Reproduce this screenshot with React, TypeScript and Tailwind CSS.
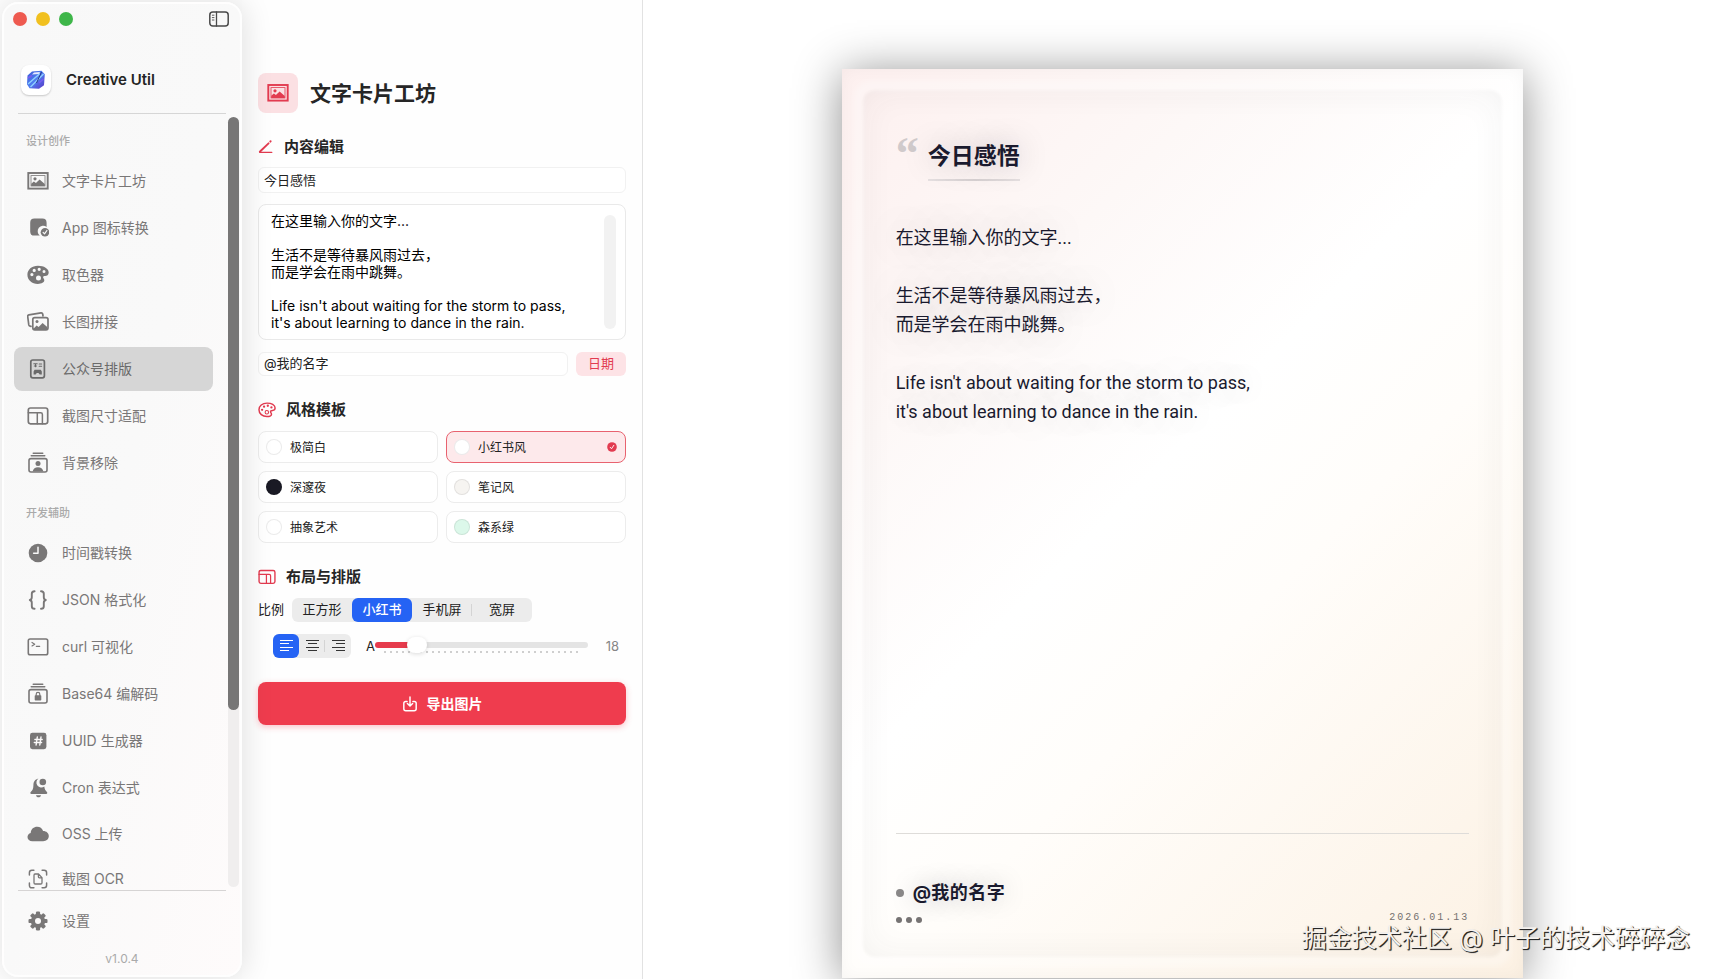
import React, { useState } from "react";

type IconProps = { className?: string };

function Svg({ className = "", children }: { className?: string; children: React.ReactNode }) {
  return (
    <svg
      viewBox="0 0 22 22"
      fill="none"
      stroke="currentColor"
      strokeWidth="1.5"
      strokeLinecap="round"
      strokeLinejoin="round"
      aria-hidden="true"
      className={`shrink-0 ${className}`}
    >
      {children}
    </svg>
  );
}

function PhotoFrameIcon({ className }: IconProps) {
  return (
    <Svg className={className}>
      <rect x="1.3" y="3" width="19.4" height="15.6" strokeWidth="1.9" strokeLinejoin="miter" />
      <rect x="4" y="5.6" width="14" height="10.4" strokeWidth="0.8" strokeLinejoin="miter" />
      <circle cx="8" cy="8.8" r="1.6" fill="currentColor" stroke="none" />
      <path d="M4.2 16v-2.2l2.7-2.2 2 1.5 3.7-3.6 5.2 4.4V16z" fill="currentColor" stroke="none" />
    </Svg>
  );
}

function AppCheckIcon({ className }: IconProps) {
  return (
    <Svg className={className}>
      <path
        d="M7.4 1.6h8c2.8 0 4.2 1.4 4.2 4.2v4.1a5.4 5.4 0 0 0-6.8 8.7H7.4c-2.8 0-4.2-1.400-4.200-4.200V5.800c0-2.800 1.400-4.200 4.200-4.200z"
        fill="currentColor"
        stroke="none"
      />
      <circle cx="18" cy="15.200" r="4.300" fill="currentColor" stroke="none" />
      <path d="m16.100 15.400 1.400 1.500 2.400-3.400" className="stroke-[#f9f9f9]" strokeWidth="1.200" />
    </Svg>
  );
}

function PaletteFillIcon({ className }: IconProps) {
  return (
    <Svg className={className}>
      <path
        fillRule="evenodd"
        fill="currentColor"
        stroke="none"
        d="M11 1.800C4.800 1.800.400 5.700.400 10.700c0 5.300 4.600 9.200 10.400 9.200 4 0 6.500-1.500 6.500-3.600 0-1.600-1.200-2-1.200-3 0-.900.800-1.300 2-1.300 2 0 3.600-1.100 3.600-3.500C21.700 4.700 17 1.800 11 1.800zM4.900 9a1.600 1.600 0 1 1 0 3.200A1.600 1.600 0 0 1 4.900 9zm2.300-4.200a1.600 1.600 0 1 1 0 3.200 1.600 1.600 0 0 1 0-3.200zm5-1.100a1.600 1.600 0 1 1 0 3.200 1.600 1.600 0 0 1 0-3.200zm4.800 2.200a1.500 1.500 0 1 1 0 3 1.500 1.500 0 0 1 0-3zm-5.500 5.600a2.500 2.500 0 1 1 0 5 2.500 2.500 0 0 1 0-5z"
      />
    </Svg>
  );
}

function PaletteIcon({ className }: IconProps) {
  return (
    <Svg className={className}>
      <path
        strokeWidth="1.800"
        d="M11 2.600C5.200 2.600 1.200 6.100 1.200 10.600c0 4.900 4.300 8.400 9.600 8.400 3.600 0 5.700-1.200 5.700-2.900 0-1.400-1.200-1.700-1.200-2.900s1.100-1.700 2.500-1.700c1.800 0 3.100-.900 3.100-2.800 0-3.800-4.400-6.100-9.900-6.100z"
      />
      <g fill="currentColor" stroke="none">
        <circle cx="5" cy="10.800" r="1.400" />
        <circle cx="7.400" cy="7" r="1.400" />
        <circle cx="12" cy="5.800" r="1.400" />
        <circle cx="16.400" cy="7.900" r="1.400" />
      </g>
      <circle cx="10.800" cy="13.800" r="2.100" strokeWidth="1.300" />
    </Svg>
  );
}

function PhotoStackIcon({ className }: IconProps) {
  return (
    <Svg className={className}>
      <path
        d="M4 15.300 3 15.100c-.700-.100-1.100-.600-1.200-1.200L.700 5.600c-.100-.900.400-1.500 1.200-1.700L14 1.800c.900-.100 1.500.300 1.700 1.200l.300 2"
        strokeWidth="1.700"
      />
      <rect x="5.800" y="6.600" width="15.200" height="12.200" rx="2" strokeWidth="1.700" />
      <circle cx="10" cy="10.500" r="1.500" fill="currentColor" stroke="none" />
      <path d="m6.600 17.500 3-3 2 1.500 4-4 4.600 4v2.200H6.600z" fill="currentColor" stroke="none" />
    </Svg>
  );
}

function RichDocIcon({ className }: IconProps) {
  return (
    <Svg className={className}>
      <rect x="3.800" y="2" width="13.600" height="17.800" rx="2" strokeWidth="1.700" />
      <path d="M6.800 5.700h3.400M8.500 5.700v3M7.300 8h2.200M12.200 6h2.400M12.200 8.300h2.400" strokeWidth="1.100" />
      <path d="M6.600 16.600v-3.200l1-1.700h6.200l1 1.700v3.200h-2.100l-1.200-1.700H9.800l-1.200 1.700z" fill="currentColor" stroke="none" />
    </Svg>
  );
}

function LayoutIcon({ className }: IconProps) {
  return (
    <Svg className={className}>
      <rect x="1.300" y="3" width="19.400" height="15.800" rx="2.200" strokeWidth="1.700" />
      <path d="M1.300 7.800h12.400c1 0 1.700.600 1.700 1.600v9.400M10.300 8v10.800" strokeWidth="1.500" />
    </Svg>
  );
}

function StackPersonIcon({ className }: IconProps) {
  return (
    <Svg className={className}>
      <path d="M6.200 1.200h9.600M4.200 3.800h13.600" strokeWidth="1.400" />
      <rect x="2" y="6.600" width="18" height="13.400" rx="2" strokeWidth="1.600" />
      <circle cx="11" cy="11.400" r="2.500" fill="currentColor" stroke="none" />
      <path d="M5.600 19.600c.600-3 2.600-4.400 5.400-4.400s4.800 1.400 5.400 4.400z" fill="currentColor" stroke="none" />
    </Svg>
  );
}

function ClockIcon({ className }: IconProps) {
  return (
    <Svg className={className}>
      <circle cx="11" cy="11" r="9.300" fill="currentColor" stroke="none" />
      <path d="M11 5.300v6H6.600" className="stroke-[#f9f9f9]" strokeWidth="1.500" />
    </Svg>
  );
}

function BracesIcon({ className }: IconProps) {
  return (
    <Svg className={className}>
      <path
        strokeWidth="1.900"
        d="M7.600 2.200C5.500 2.200 4.800 3 4.800 4.800v3.400c0 1.500-.600 2.400-2 2.800 1.400.400 2 1.300 2 2.800v3.400c0 1.800.700 2.600 2.800 2.600M14 2.200c2.100 0 2.800.800 2.800 2.600v3.400c0 1.500.600 2.400 2 2.800-1.400.400-2 1.300-2 2.800v3.400c0 1.800-.700 2.600-2.800 2.600"
      />
    </Svg>
  );
}

function TerminalIcon({ className }: IconProps) {
  return (
    <Svg className={className}>
      <rect x="1.300" y="3" width="19.400" height="15.800" rx="1.800" strokeWidth="1.600" />
      <path d="m5 6.500 2.700 1.700L5 9.900M9.300 10.300h3.400" strokeWidth="1.200" />
    </Svg>
  );
}

function StackLockIcon({ className }: IconProps) {
  return (
    <Svg className={className}>
      <path d="M6.200 1.200h9.600M4.200 3.800h13.600" strokeWidth="1.400" />
      <rect x="2" y="6.600" width="18" height="13.400" rx="2" strokeWidth="1.600" />
      <rect x="7.700" y="12.200" width="6.600" height="5.200" rx="0.700" fill="currentColor" stroke="none" />
      <path d="M9.200 12.600v-1.300c0-2.500 3.600-2.500 3.600 0v1.300" strokeWidth="1.200" />
    </Svg>
  );
}

function HashIcon({ className }: IconProps) {
  return (
    <Svg className={className}>
      <rect x="3" y="2.800" width="16.400" height="16.400" rx="2.400" fill="currentColor" stroke="none" />
      <path d="m10.300 7-1.200 8M14 7l-1.200 8M7.900 9.500h7.300M7.300 12.500h7.300" className="stroke-[#fbf9f9]" strokeWidth="1.400" />
    </Svg>
  );
}

function BellIcon({ className }: IconProps) {
  return (
    <Svg className={className}>
      <path
        d="M11.400 1.600c-3.600.800-4.900 3.300-5 6.800-.100 3.600-.900 4.700-2.700 6.500-.800.800-.400 2 .700 2h14.800c1.100 0 1.500-1.200.700-2-1.500-1.500-2.300-2.600-2.600-5.400a4.600 4.600 0 0 1-5.900-7.900z"
        fill="currentColor"
        stroke="none"
      />
      <circle cx="15.800" cy="5" r="3.300" fill="currentColor" stroke="none" />
      <path d="M9 18.200h5c-.3 1.400-1.200 2.100-2.500 2.100S9.300 19.600 9 18.200z" fill="currentColor" stroke="none" />
    </Svg>
  );
}

function CloudIcon({ className }: IconProps) {
  return (
    <Svg className={className}>
      <path
        d="M5.400 18.200C2.500 18.200.5 16.400.5 14c0-2 1.300-3.600 3.200-4.100C4 6 6.800 3.800 10.200 3.800c2.800 0 5 1.600 5.900 4.100 3.300 0 5.700 2.200 5.700 5.100s-2.300 5.200-5.600 5.200z"
        fill="currentColor"
        stroke="none"
      />
    </Svg>
  );
}

function DocScanIcon({ className }: IconProps) {
  return (
    <Svg className={className}>
      <path d="M2.400 7V4.700c0-1.700.9-2.500 2.500-2.500h2M15.100 2.200h2c1.700 0 2.500.8 2.500 2.500V7M19.600 15v2.300c0 1.700-.9 2.500-2.500 2.500h-2M6.900 19.800h-2c-1.700 0-2.500-.9-2.500-2.500V15" />
      <path
        d="M8 6h3.500l3.500 3.600v5.200c0 .8-.4 1.200-1.200 1.200H8.200c-.8 0-1.200-.4-1.200-1.200V7.200C7 6.400 7.200 6 8 6zM11.400 6.200v2.600c0 .7.300 1 1 1h2.400"
        strokeWidth="1.300"
      />
    </Svg>
  );
}

function GearIcon({ className }: IconProps) {
  return (
    <Svg className={className}>
      <g fill="currentColor" stroke="none">
        {[0, 45, 90, 135].map((a) => (
          <rect key={a} x="8.900" y="1.500" width="4.200" height="19" rx="1.200" transform={`rotate(${a} 11 11)`} />
        ))}
        <circle cx="11" cy="11" r="7.200" />
      </g>
      <circle cx="11" cy="11" r="3" className="fill-[#fcfbfb]" stroke="none" />
    </Svg>
  );
}

function SidebarIcon({ className }: IconProps) {
  return (
    <Svg className={className}>
      <rect x="1.800" y="4" width="18.400" height="14" rx="3" />
      <path d="M8.500 4v14" strokeWidth="1.300" />
      <path d="M4.300 7.200h1.700M4.300 9.600h1.700M4.300 12h1.700" strokeWidth="0.900" />
    </Svg>
  );
}

function PencilLineIcon({ className }: IconProps) {
  return (
    <Svg className={className}>
      <path d="M2.500 17.500 14.500 6" strokeWidth="2.600" />
      <path d="m17 3.500.3-.3" strokeWidth="2.800" />
      <path d="M2.500 18.300H19" strokeWidth="1.800" />
    </Svg>
  );
}

function ExportIcon({ className }: IconProps) {
  return (
    <Svg className={className}>
      <path
        d="M7 7.500H5.200C3.500 7.500 2.500 8.400 2.500 10v7.500c0 1.700 1 2.700 2.700 2.700h11.600c1.700 0 2.700-1 2.700-2.700V10c0-1.600-1-2.500-2.700-2.500H15"
        strokeWidth="2"
      />
      <path d="M11 1.500v12M7.400 10.300l3.600 3.600 3.600-3.600" strokeWidth="2" />
    </Svg>
  );
}

function CheckBadge({ className }: IconProps) {
  return (
    <Svg className={className}>
      <circle cx="11" cy="11" r="10.600" fill="currentColor" stroke="none" />
      <path d="m7 11.600 3 3.300 5-7.600" className="stroke-white" strokeWidth="2" />
    </Svg>
  );
}

const alignShort: Record<string, string> = {
  left: "M1 7.500h9M1 14.500h9",
  center: "M3 7.500h9M3 14.500h9",
  right: "M5 7.500h9M5 14.500h9",
};

function AlignIcon({ kind }: { kind: string }) {
  return (
    <svg viewBox="0 0 15 20" className="h-5 w-[15px]" fill="none" stroke="currentColor" strokeWidth="1" aria-hidden="true">
      <path d="M1 4.500h13M1 11.500h13" />
      <path d={alignShort[kind]} />
    </svg>
  );
}

function LogoArt() {
  return (
    <svg viewBox="0 0 30 30" className="size-[30px]" aria-hidden="true">
      <defs>
        <linearGradient id="cube" x1="0" y1="0" x2="1" y2="1">
          <stop offset="0" stopColor="#3b5bd6" />
          <stop offset="0.5" stopColor="#4f7df0" />
          <stop offset="1" stopColor="#5a34c4" />
        </linearGradient>
      </defs>
      <path d="M6.500 10.500 11 6.500l9.500-.8 3.300 3.500-.8 11-5 3.600-9.500-.5-2.500-4z" fill="url(#cube)" />
      <path d="m11 9.500 2-2 6-.5-1 2z" fill="#e8ebff" />
      <path d="m7 19 12-10.500M9.500 22 22.500 9" stroke="#8fd0ff" strokeWidth="1.400" />
      <path d="m7 13 4-2.500M18 18l4.500-4" stroke="#7a5cf0" strokeWidth="1.500" />
      <path d="m20.500 7-5 11" stroke="#22307f" strokeWidth="0.900" />
    </svg>
  );
}

type NavItem = { label: string; icon: (p: IconProps) => React.ReactElement; compact?: boolean };

const designItems: NavItem[] = [
  { label: "文字卡片工坊", icon: PhotoFrameIcon },
  { label: "App 图标转换", icon: AppCheckIcon },
  { label: "取色器", icon: PaletteFillIcon },
  { label: "长图拼接", icon: PhotoStackIcon },
  { label: "公众号排版", icon: RichDocIcon },
  { label: "截图尺寸适配", icon: LayoutIcon },
  { label: "背景移除", icon: StackPersonIcon },
];

const devItems: NavItem[] = [
  { label: "时间戳转换", icon: ClockIcon },
  { label: "JSON 格式化", icon: BracesIcon },
  { label: "curl 可视化", icon: TerminalIcon },
  { label: "Base64 编解码", icon: StackLockIcon },
  { label: "UUID 生成器", icon: HashIcon },
  { label: "Cron 表达式", icon: BellIcon },
  { label: "OSS 上传", icon: CloudIcon, compact: true },
  { label: "截图 OCR", icon: DocScanIcon, compact: true },
];

function NavButton({ item, active, onSelect }: { item: NavItem; active?: boolean; onSelect?: () => void }) {
  const Icon = item.icon;
  return (
    <button
      type="button"
      onClick={onSelect}
      aria-current={active ? "page" : undefined}
      className={`flex w-full shrink-0 items-center gap-[13px] rounded-lg pl-[13px] text-left text-sm ${
        item.compact ? "h-[42px]" : "h-11"
      } ${active ? "bg-[#d6d6d6] text-[#6a6a6a]" : "text-[#797777]"}`}
    >
      <Icon className="size-[22px]" />
      <span>{item.label}</span>
    </button>
  );
}

function Sidebar() {
  const [active, setActive] = useState("公众号排版");
  return (
    <aside className="relative z-10 m-[2px] mr-0 flex w-60 shrink-0 flex-col overflow-hidden rounded-2xl border-2 border-white/80 bg-linear-to-br from-[#f8f8f8] via-[#f9f9f9] to-[#fefbfb] shadow-[2px_0_30px_rgba(0,0,0,0.12)]">
      <div className="flex h-[30px] shrink-0 items-center gap-[9px] pr-[10px] pl-[9px]">
        <button type="button" aria-label="关闭" className="size-[14px] rounded-full bg-[#ee5a50]" />
        <button type="button" aria-label="最小化" className="size-[14px] rounded-full bg-[#f1c01f]" />
        <button type="button" aria-label="缩放" className="size-[14px] rounded-full bg-[#3eb649]" />
        <button type="button" aria-label="切换边栏" className="ml-auto text-[#4a4a4a]">
          <SidebarIcon className="size-[22px]" />
        </button>
      </div>
      <div className="mt-[31px] flex shrink-0 items-center gap-[15px] pl-[17px]">
        <span className="flex size-[30px] items-center justify-center rounded-lg bg-white shadow-[0_1px_2px_rgba(0,0,0,0.2)]">
          <LogoArt />
        </span>
        <span className="text-[15px] font-semibold text-[#242424]">Creative Util</span>
      </div>
      <div className="mt-[18px] mr-[14px] ml-[14px] h-px shrink-0 bg-[#d6d6d6]" />
      <div className="flex min-h-0 flex-1">
        <nav aria-label="工具" className="flex min-w-0 flex-1 flex-col gap-[3px] overflow-hidden pr-[15px] pl-[10px]">
          <h2 className="mt-[18px] mb-[6px] pl-3 text-[11px] leading-[18px] font-medium text-[#aaa]">设计创作</h2>
          {designItems.map((item) => (
            <NavButton key={item.label} item={item} active={active === item.label} onSelect={() => setActive(item.label)} />
          ))}
          <h2 className="mt-4 mb-[6px] pl-3 text-[11px] leading-[18px] font-medium text-[#aaa]">开发辅助</h2>
          {devItems.map((item) => (
            <NavButton key={item.label} item={item} active={active === item.label} onSelect={() => setActive(item.label)} />
          ))}
        </nav>
        <div className="mt-[3px] mr-px mb-[3px] w-[11px] shrink-0 rounded-full bg-[#f0eeee]">
          <div className="h-[77%] rounded-full bg-[#777676]" />
        </div>
      </div>
      <div className="mr-[14px] ml-[14px] h-px shrink-0 bg-[#d6d4d4]" />
      <div className="mt-2 shrink-0 pr-[22px] pl-[10px]">
        <NavButton item={{ label: "设置", icon: GearIcon }} />
      </div>
      <p className="mt-[7px] mb-[7px] shrink-0 text-center text-xs leading-[18px] text-[#aaa]">v1.0.4</p>
    </aside>
  );
}

function SectionTitle({ icon, children }: { icon: React.ReactNode; children: React.ReactNode }) {
  return (
    <h2 className="mt-6 flex h-5 items-center gap-[10px] text-[15px] font-bold text-[#262626]">
      <span className="text-[#e23b50]">{icon}</span>
      {children}
    </h2>
  );
}

const styles = [
  { name: "极简白", dot: "bg-white" },
  { name: "小红书风", dot: "bg-white" },
  { name: "深邃夜", dot: "bg-[#1a1a24]" },
  { name: "笔记风", dot: "bg-[#f6f4f1]" },
  { name: "抽象艺术", dot: "bg-white" },
  { name: "森系绿", dot: "bg-[#dcf8ea]" },
];

const ratios = ["正方形", "小红书", "手机屏", "宽屏"];
const aligns = [
  { id: "left", label: "左对齐" },
  { id: "center", label: "居中" },
  { id: "right", label: "右对齐" },
];

type EditorProps = {
  title: string;
  setTitle: (v: string) => void;
  body: string;
  setBody: (v: string) => void;
  author: string;
  setAuthor: (v: string) => void;
  size: number;
  setSize: (v: number) => void;
};

function Editor(p: EditorProps) {
  const [style, setStyle] = useState("小红书风");
  const [ratio, setRatio] = useState("小红书");
  const [align, setAlign] = useState("left");
  const fill = ((p.size - 12) / 36) * 100;

  return (
    <section className="w-[401px] shrink-0 border-r border-[#e2e2e2] bg-[#fefefe] px-4 pt-[73px]">
      <header className="flex items-center gap-3">
        <span className="flex size-10 items-center justify-center rounded-lg bg-[#fbe0e3] text-[#e23b50]">
          <PhotoFrameIcon className="size-[22px]" />
        </span>
        <h1 className="pt-[2px] text-[21px] leading-7 font-bold text-[#262626]">文字卡片工坊</h1>
      </header>

      <SectionTitle icon={<PencilLineIcon className="size-4" />}>内容编辑</SectionTitle>
      <input
        aria-label="标题"
        value={p.title}
        onChange={(e) => p.setTitle(e.target.value)}
        className="mt-[10px] h-[26px] w-full rounded-md border border-[#f1f1f1] bg-white px-[5px] pb-[2px] text-[13px] text-[#222] outline-none"
      />
      <div className="mt-[11px] flex h-[136px] rounded-lg border border-[#e9e9e9] bg-white pt-[7px] pr-[9px] pb-[7px] pl-3">
        <textarea
          aria-label="正文"
          value={p.body}
          onChange={(e) => p.setBody(e.target.value)}
          className="block h-full min-w-0 flex-1 resize-none overflow-hidden bg-transparent text-sm leading-[17px] text-black outline-none"
        />
        <div className="my-[3px] w-3 shrink-0 rounded-full bg-[#f2f2f2]" />
      </div>
      <div className="mt-3 flex h-6 gap-2">
        <input
          aria-label="署名"
          value={p.author}
          onChange={(e) => p.setAuthor(e.target.value)}
          className="min-w-0 flex-1 rounded-md border border-[#f1f1f1] bg-white px-[5px] text-[13px] text-[#222] outline-none"
        />
        <button type="button" className="w-[50px] rounded-md bg-[#fde3e6] text-[13px] text-[#e23b50]">
          日期
        </button>
      </div>

      <SectionTitle icon={<PaletteIcon className="size-[18px]" />}>风格模板</SectionTitle>
      <div className="mt-[11px] grid grid-cols-2 gap-2">
        {styles.map((s) => {
          const on = s.name === style;
          return (
            <button
              key={s.name}
              type="button"
              aria-pressed={on}
              onClick={() => setStyle(s.name)}
              className={`flex h-8 items-center gap-2 rounded-lg border px-[7px] text-xs text-[#222] ${
                on ? "border-[#e8626f] bg-[#fde9eb]" : "border-[#ececec] bg-white"
              }`}
            >
              <span className={`size-4 rounded-full border border-black/8 ${s.dot}`} />
              <span className="pt-[2px]">{s.name}</span>
              {on && <CheckBadge className="mr-px ml-auto size-[10px] text-[#e23b50]" />}
            </button>
          );
        })}
      </div>

      <SectionTitle icon={<LayoutIcon className="size-[18px]" />}>布局与排版</SectionTitle>
      <div className="mt-[11px] flex h-6 items-center gap-2 text-[13px] text-[#222]">
        <span>比例</span>
        <div role="group" aria-label="比例" className="flex h-full w-60 rounded-md bg-[#ececec]">
          {ratios.map((r, i) => (
            <button
              key={r}
              type="button"
              aria-pressed={r === ratio}
              onClick={() => setRatio(r)}
              className={`relative h-full flex-1 ${r === ratio ? "rounded-md bg-[#2563f4] font-medium text-white" : ""}`}
            >
              {r}
              {i === 2 && r !== ratio && <span className="absolute top-[6px] right-0 h-3 w-px bg-[#d4d4d4]" />}
            </button>
          ))}
        </div>
      </div>
      <div className="mt-3 flex h-6 items-center pl-[15px]">
        <div role="group" aria-label="对齐" className="flex h-full w-[78px] rounded-md bg-[#ececec]">
          {aligns.map((a, i) => (
            <button
              key={a.id}
              type="button"
              aria-label={a.label}
              aria-pressed={a.id === align}
              onClick={() => setAlign(a.id)}
              className={`relative flex h-full flex-1 items-center justify-center ${
                a.id === align ? "rounded-md bg-[#2563f4] text-white" : "text-[#333]"
              }`}
            >
              <AlignIcon kind={a.id} />
              {i === 1 && a.id !== align && <span className="absolute top-[6px] right-0 h-3 w-px bg-[#d4d4d4]" />}
            </button>
          ))}
        </div>
        <label htmlFor="font-size" className="ml-[15px] pt-[2px] text-[13px] text-[#222]">
          A
        </label>
        <div className="relative h-6 flex-1">
          <svg className="absolute top-[17px] left-[9px] h-[2px] w-[calc(100%-18px)]" aria-hidden="true">
            <line x1="0" y1="1" x2="100%" y2="1" stroke="#cfcfcf" strokeWidth="2" strokeDasharray="2 4" />
          </svg>
          <input
            id="font-size"
            type="range"
            min={12}
            max={48}
            value={p.size}
            onChange={(e) => p.setSize(Number(e.target.value))}
            style={{ backgroundImage: `linear-gradient(to right, #e63b4c ${fill}%, #e4e4e4 ${fill}%)` }}
            className="absolute inset-x-0 top-2 h-[6px] w-full appearance-none rounded-full [&::-webkit-slider-thumb]:h-4 [&::-webkit-slider-thumb]:w-5 [&::-webkit-slider-thumb]:appearance-none [&::-webkit-slider-thumb]:rounded-full [&::-webkit-slider-thumb]:bg-white [&::-webkit-slider-thumb]:shadow-[0_1px_4px_rgba(0,0,0,0.14)]"
          />
        </div>
        <output htmlFor="font-size" className="w-[38px] pt-[2px] pr-[7px] text-right text-[13px] text-[#868686]">
          {p.size}
        </output>
      </div>

      <button
        type="button"
        className="mt-6 flex h-[43px] w-full items-center justify-center gap-[9px] rounded-lg bg-[#ef3c4e] text-sm font-bold text-white shadow-[0_2px_6px_rgba(239,60,78,0.3)]"
      >
        <ExportIcon className="size-4" />
        导出图片
      </button>
    </section>
  );
}

function Preview({ title, body, author, size }: { title: string; body: string; author: string; size: number }) {
  return (
    <main className="flex min-w-0 flex-1 justify-center overflow-hidden bg-white pt-[69px] pb-px pl-[6px]">
      <article className="relative flex aspect-[3/4] h-full flex-col bg-[linear-gradient(135deg,#fdf0ef_0%,#fdf8f7_25%,#ffffff_45%,#fffdfa_60%,#fcf1e3_100%)] px-[54px] pt-[65px] pb-[55px] text-[#1a1a2e] shadow-[0_4px_44px_rgba(0,0,0,0.44)]">
        <div className="pointer-events-none absolute inset-0 shadow-[inset_0_0_16px_rgba(0,0,0,0.035)]" />
        <div className="pointer-events-none absolute inset-3 rounded-2xl border-[10px] border-white/30 blur-[3px]" />
        <div className="pointer-events-none absolute inset-[21px] rounded-xl shadow-[inset_0_0_34px_rgba(60,50,50,0.055)] blur-[1px]" />
        <div className="flex items-start gap-[9px]">
          <span className="h-10 font-['Liberation_Serif',serif] text-[46px] leading-10 font-bold text-[#d0cacb]">“</span>
          <div>
            <h2 className="pt-1 text-[23px] leading-9 font-bold [text-shadow:0_0_30px_rgba(26,26,46,0.25)]">{title}</h2>
            <div className="mt-[5px] h-[2px] bg-linear-to-r from-[#e6e0e1] via-[#d8d2d3] to-[#e6e0e1]" />
          </div>
        </div>
        <p
          style={{ fontSize: size }}
          className="mt-[42px] font-['Roboto','Noto_Sans_CJK_SC',sans-serif] leading-[29px] whitespace-pre-line [text-shadow:0_0_36px_rgba(26,26,46,0.25)]"
        >
          {body}
        </p>
        <footer className="mt-auto flex items-end justify-between border-t border-[#dedcd9] pt-11">
          <div>
            <div className="flex items-center gap-[9px]">
              <span className="size-2 rounded-full bg-[#8b8989]" />
              <span className="text-lg leading-[29px] font-bold tracking-wide [text-shadow:0_0_24px_rgba(26,26,46,0.25)]">{author}</span>
            </div>
            <div className="mt-[10px] flex gap-1">
              <span className="size-[6px] rounded-full bg-[#767373]" />
              <span className="size-[6px] rounded-full bg-[#767373]" />
              <span className="size-[6px] rounded-full bg-[#767373]" />
            </div>
          </div>
          <time dateTime="2026-01-13" className="font-['Liberation_Mono',monospace] text-[10px] leading-[10px] tracking-[2px] text-[#75716f]">
            2026.01.13
          </time>
        </footer>
      </article>
    </main>
  );
}

export default function App() {
  const [title, setTitle] = useState("今日感悟");
  const [body, setBody] = useState(
    "在这里输入你的文字...\n\n生活不是等待暴风雨过去，\n而是学会在雨中跳舞。\n\nLife isn't about waiting for the storm to pass,\nit's about learning to dance in the rain."
  );
  const [author, setAuthor] = useState("@我的名字");
  const [size, setSize] = useState(18);

  return (
    <div lang="zh-CN" className="relative flex h-screen overflow-hidden bg-[#fdfdfd] font-['Inter','Noto_Sans_CJK_SC',sans-serif]">
      <Sidebar />
      <Editor title={title} setTitle={setTitle} body={body} setBody={setBody} author={author} setAuthor={setAuthor} size={size} setSize={setSize} />
      <Preview title={title} body={body} author={author} size={size} />
      <p className="pointer-events-none absolute right-[26px] bottom-[23px] z-20 text-[25px] leading-9 text-[#f4f1ee] [text-shadow:1px_1px_1px_#222,1px_1px_0_#444]">
        掘金技术社区 @ 叶子的技术碎碎念
      </p>
    </div>
  );
}
